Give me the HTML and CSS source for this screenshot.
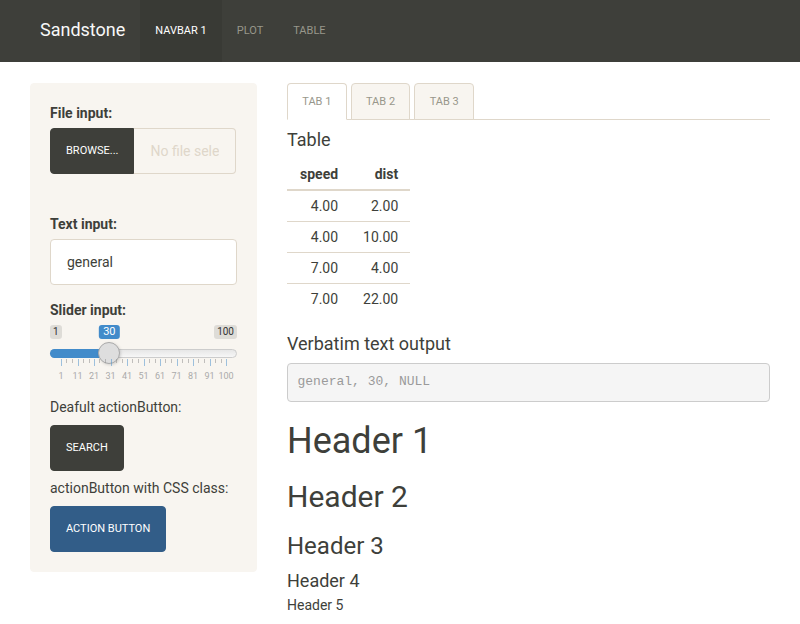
FILE: index.html
```html
<!DOCTYPE html>
<html>
<head>
<meta charset="utf-8">
<link rel="stylesheet" href="styles.css">
</head>
<body>
<nav class="navbar">
  <span class="brand">Sandstone</span>
  <a class="nav-item active">Navbar 1</a>
  <a class="nav-item">Plot</a>
  <a class="nav-item">Table</a>
</nav>
<div class="layout">
  <aside class="well">
    <div class="form-group file-group">
      <label class="ctl-label">File input:</label>
      <div class="input-group">
        <span class="btn btn-default btn-browse">Browse...</span>
        <input class="file-field" type="text" readonly placeholder="No file selected">
      </div>
    </div>
    <div class="form-group">
      <label class="ctl-label">Text input:</label>
      <div class="form-control">general</div>
    </div>
    <div class="form-group">
      <label class="ctl-label">Slider input:</label>
      <div class="irs">
        <span class="irs-min">1</span>
        <span class="irs-max">100</span>
        <div class="irs-line"></div>
        <div class="irs-inner">
          <div class="irs-bar" style="width: calc(29.29% + 11px)"></div>
          <span class="irs-single" style="left: 29.29%">30</span>
          <span class="irs-slider" style="left: 29.29%"></span>
          <div class="irs-grid">
            <span class="pol" style="left:0%"></span>
            <span class="pol small" style="left:3.33%"></span>
            <span class="pol small" style="left:6.67%"></span>
            <span class="pol" style="left:10%"></span>
            <span class="pol small" style="left:13.33%"></span>
            <span class="pol small" style="left:16.67%"></span>
            <span class="pol" style="left:20%"></span>
            <span class="pol small" style="left:23.33%"></span>
            <span class="pol small" style="left:26.67%"></span>
            <span class="pol" style="left:30%"></span>
            <span class="pol small" style="left:33.33%"></span>
            <span class="pol small" style="left:36.67%"></span>
            <span class="pol" style="left:40%"></span>
            <span class="pol small" style="left:43.33%"></span>
            <span class="pol small" style="left:46.67%"></span>
            <span class="pol" style="left:50%"></span>
            <span class="pol small" style="left:53.33%"></span>
            <span class="pol small" style="left:56.67%"></span>
            <span class="pol" style="left:60%"></span>
            <span class="pol small" style="left:63.33%"></span>
            <span class="pol small" style="left:66.67%"></span>
            <span class="pol" style="left:70%"></span>
            <span class="pol small" style="left:73.33%"></span>
            <span class="pol small" style="left:76.67%"></span>
            <span class="pol" style="left:80%"></span>
            <span class="pol small" style="left:83.33%"></span>
            <span class="pol small" style="left:86.67%"></span>
            <span class="pol" style="left:90%"></span>
            <span class="pol small" style="left:93.33%"></span>
            <span class="pol small" style="left:96.67%"></span>
            <span class="pol" style="left:100%"></span>
            <span class="grid-text" style="left:0%">1</span>
            <span class="grid-text" style="left:10%">11</span>
            <span class="grid-text" style="left:20%">21</span>
            <span class="grid-text" style="left:30%">31</span>
            <span class="grid-text" style="left:40%">41</span>
            <span class="grid-text" style="left:50%">51</span>
            <span class="grid-text" style="left:60%">61</span>
            <span class="grid-text" style="left:70%">71</span>
            <span class="grid-text" style="left:80%">81</span>
            <span class="grid-text" style="left:90%">91</span>
            <span class="grid-text" style="left:100%">100</span>
          </div>
        </div>
      </div>
    </div>
    <p class="plain">Deafult actionButton:</p>
    <div class="btn-row"><span class="btn btn-default">Search</span></div>
    <p class="plain second">actionButton with CSS class:</p>
    <div class="btn-row"><span class="btn btn-primary">Action Button</span></div>
  </aside>
  <main class="main">
    <ul class="tabs">
      <li class="tab active">Tab 1</li>
      <li class="tab">Tab 2</li>
      <li class="tab">Tab 3</li>
    </ul>
    <h4 class="title">Table</h4>
    <table class="data">
      <thead><tr><th>speed</th><th>dist</th></tr></thead>
      <tbody>
        <tr><td>4.00</td><td>2.00</td></tr>
        <tr><td>4.00</td><td>10.00</td></tr>
        <tr><td>7.00</td><td>4.00</td></tr>
        <tr><td>7.00</td><td>22.00</td></tr>
      </tbody>
    </table>
    <h4 class="title">Verbatim text output</h4>
    <pre class="verbatim">general, 30, NULL</pre>
    <h1>Header 1</h1>
    <h2>Header 2</h2>
    <h3>Header 3</h3>
    <h4 class="h4">Header 4</h4>
    <h5>Header 5</h5>
  </main>
</div>
</body>
</html>
```
FILE: styles.css
```css
* { box-sizing: border-box; }
html, body { margin: 0; padding: 0; }
body {
  font-family: Roboto, "Liberation Sans", sans-serif;
  font-size: 14px;
  line-height: 20px;
  color: #3e3f3a;
  background: #fff;
}

/* navbar */
.navbar {
  display: flex;
  height: 62px;
  background: #3e3f3a;
  padding-left: 25px;
}
.brand {
  padding: 0 15px;
  font-size: 18px;
  line-height: 60px;
  color: #f8f8f8;
}
.nav-item {
  padding: 0 15px;
  font-size: 11px;
  line-height: 62px;
  text-transform: uppercase;
  color: #98978b;
}
.nav-item.active {
  background: #393a35;
  color: #fff;
}

/* layout */
.layout {
  display: flex;
  align-items: flex-start;
  padding: 21px 30px 0 30px;
  gap: 30px;
}
.well {
  width: 227px;
  flex: none;
  background: #f8f5f0;
  border: 1px solid #f8f5f0;
  border-radius: 4px;
  padding: 19px;
}
.main { flex: 1; min-width: 0; }

/* form */
.form-group { margin-bottom: 15px; }
.file-group { margin-bottom: 40px; }
.ctl-label {
  display: inline-block;
  font-weight: 700;
  margin-bottom: 5px;
}
.input-group { display: flex; height: 46px; padding-right: 1px; }
.btn {
  display: inline-block;
  font-size: 11px;
  line-height: 20px;
  padding: 12px 15px;
  border: 1px solid transparent;
  border-radius: 4px;
  text-transform: uppercase;
  color: #fff;
  white-space: nowrap;
}
.btn-default { background: #3e3f3a; border-color: #3e3f3a; }
.btn-primary { background: #325d88; border-color: #325d88; }
.btn-browse { border-radius: 4px 0 0 4px; flex: none; }
.file-field {
  flex: 1;
  min-width: 0;
  width: 100%;
  height: 46px;
  margin: 0;
  border: 1px solid #dfd7ca;
  border-left: 0;
  border-radius: 0 4px 4px 0;
  padding: 12px 16px;
  font-family: Roboto, "Liberation Sans", sans-serif;
  font-size: 14px;
  line-height: 20px;
  color: #3e3f3a;
  background: #f8f5f0;
  outline: none;
}
.file-field::placeholder { color: #dfd7ca; opacity: 1; }
.form-control {
  height: 46px;
  border: 1px solid #dfd7ca;
  border-radius: 4px;
  background: #fff;
  padding: 12px 16px;
  color: #3e3f3a;
}

/* slider */
.irs {
  position: relative;
  height: 56px;
}
.irs-min, .irs-max, .irs-single {
  position: absolute;
  top: 0;
  padding: 1px 3px;
  line-height: 12px;
  border-radius: 3px;
}
.irs-min, .irs-max {
  font-size: 10px;
  color: #333;
  background: rgba(0,0,0,0.1);
}
.irs-min { left: 0; }
.irs-max { right: 0; }
.irs-line {
  position: absolute;
  left: 0; right: 0;
  top: 24px;
  height: 9px;
  border: 1px solid #cccccc;
  border-radius: 16px;
  background: linear-gradient(to bottom, #dedede -50%, #fff 150%);
}
.irs-inner {
  position: absolute;
  left: 11px; right: 11px;
  top: 0; bottom: 0;
}
.irs-bar {
  position: absolute;
  left: -11px;
  top: 24px;
  height: 9px;
  background: #428bca;
  border-radius: 16px 0 0 16px;
}
.irs-single {
  transform: translateX(-50%);
  font-size: 11px;
  padding: 1px 4px;
  color: #fff;
  background: #428bca;
}
.irs-slider {
  position: absolute;
  top: 17px;
  width: 22px;
  height: 22px;
  margin-left: -11px;
  border: 1px solid #aaa;
  border-radius: 50%;
  background: #dedede;
  box-shadow: 1px 1px 3px rgba(0,0,0,0.15);
}
.irs-grid {
  position: absolute;
  left: 0; right: 0;
  top: 34px;
  height: 22px;
}
.pol {
  position: absolute;
  top: 0;
  width: 1px;
  height: 7px;
  background: #428bca;
  opacity: 0.5;
}
.pol.small {
  height: 4px;
  background: #888;
  opacity: 0.5;
}
.grid-text {
  position: absolute;
  top: 11px;
  transform: translateX(-50%);
  font-size: 9px;
  line-height: 12px;
  color: #aaa;
  white-space: nowrap;
}

.plain { margin: 0 0 8px 0; padding-top: 1px; line-height: 20px; }
.plain.second { margin-top: 6px; }
.btn-row { height: 46px; }

/* tabs */
.tabs {
  list-style: none;
  margin: 0;
  padding: 0;
  display: flex;
  border-bottom: 1px solid #dfd7ca;
  height: 37px;
}
.tab {
  margin-right: 4px;
  padding: 9px 14.3px;
  font-size: 11px;
  line-height: 17px;
  text-transform: uppercase;
  color: #98978b;
  background: #f8f5f0;
  border: 1px solid #dfd7ca;
  border-radius: 4px 4px 0 0;
  height: 37px;
}
.tab.active {
  background: #fff;
  border-bottom-color: #fff;
}

h1, h2, h3, h4, h5 {
  font-weight: 400;
  line-height: 1.1;
  color: #3e3f3a;
}
h1 { font-size: 36px; margin: 20px 0 10px; }
h2 { font-size: 30px; margin: 19px 0 10px; }
h3 { font-size: 24px; margin: 20px 0 10px; }
h4 { font-size: 18px; margin: 10px 0 9px; }
.h4 { margin: 11px 0 8px; }
h5 { font-size: 14px; margin: 8px 0 10px; }

/* table */
.data {
  border-collapse: collapse;
  margin-bottom: 20px;
}
.data th, .data td {
  padding: 5px 12px 5px 13px;
  text-align: right;
  line-height: 20px;
}
.data th {
  font-weight: 700;
  border-bottom: 2px solid #dfd7ca;
}
.data td { border-top: 1px solid #dfd7ca; }

.verbatim {
  margin: 0 0 10px;
  padding: 9.5px;
  font-family: "Liberation Mono", "DejaVu Sans Mono", monospace;
  font-size: 13px;
  line-height: 18px;
  color: #9a9a9a;
  background: #f5f5f5;
  border: 1px solid #cccccc;
  border-radius: 4px;
}
```
